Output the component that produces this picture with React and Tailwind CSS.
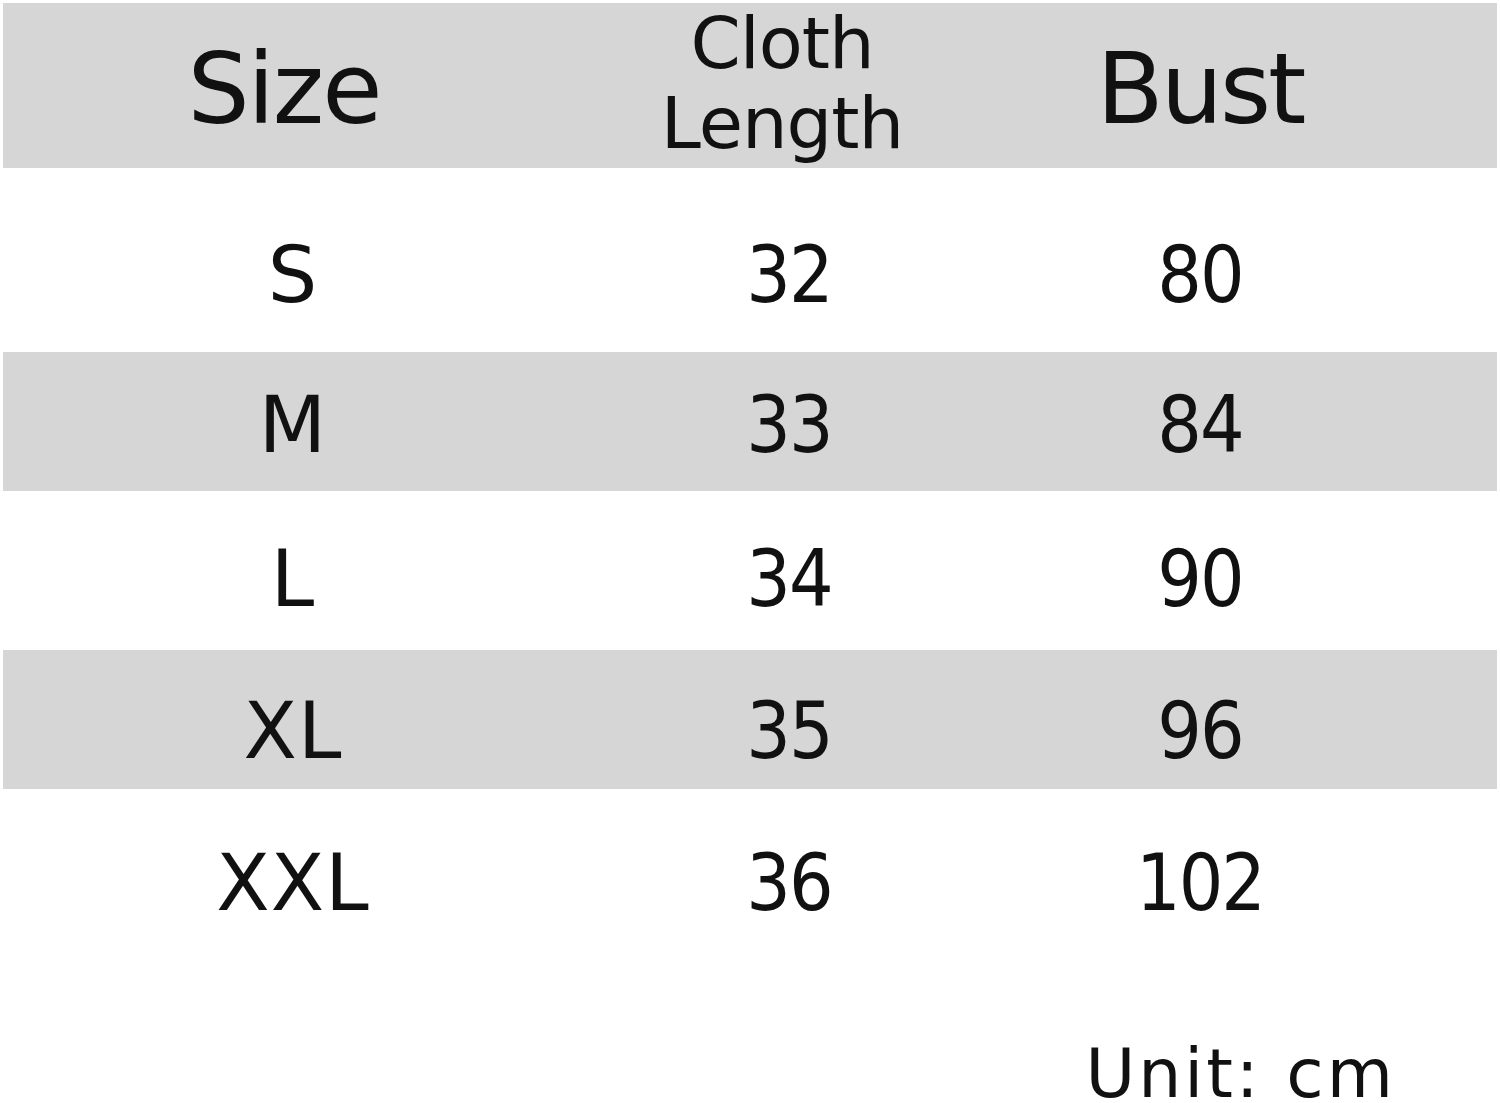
import React from 'react';

const rows = [
  { size: 'S', length: '32', bust: '80', gray: false, h: 'h-[184px]', pt: 'pt-[30px]' },
  { size: 'M', length: '33', bust: '84', gray: true, h: 'h-[139px]', pt: 'pt-[7px]' },
  { size: 'L', length: '34', bust: '90', gray: false, h: 'h-[159px]', pt: 'pt-[16px]' },
  { size: 'XL', length: '35', bust: '96', gray: true, h: 'h-[139px]', pt: 'pt-[22px]' },
  { size: 'XXL', length: '36', bust: '102', gray: false, h: 'h-[150px]', pt: 'pt-[38px]' },
];

const cols = 'grid grid-cols-[580px_410px_500px] items-center';

export default function App() {
  return (
    <div
      className="w-[1500px] h-[1103px] bg-white text-[#111] pt-[3px] px-[3px]"
      style={{ fontFamily: '"DejaVu Sans", Verdana, sans-serif' }}
    >
      {/* Header */}
      <div className={`${cols} h-[165px] bg-[#d6d6d6]`}>
        <div className="text-center text-[98px] leading-none pr-[18px] pb-[30px] tracking-[-2px]">Size</div>
        <div className="text-center text-[72px] leading-[80px] pr-[12px] pb-[42px] tracking-[-1px]">
          Cloth
          <br />
          Length
        </div>
        <div className="text-center pr-[86px] text-[98px] leading-none pb-[30px] tracking-[-3px]">Bust</div>
      </div>

      {/* Rows */}
      {rows.map((r) => (
        <div
          key={r.size}
          className={`${cols} ${r.h} ${r.pt} ${r.gray ? 'bg-[#d6d6d6]' : 'bg-white'} text-[78px] leading-none`}
        >
          <div className="text-center tracking-[1px]">{r.size}</div>
          <div className="text-center pl-[2px] font-stretch-condensed tracking-[-2px]">{r.length}</div>
          <div className="text-center pr-[86px] font-stretch-condensed tracking-[-2px]">{r.bust}</div>
        </div>
      ))}

      {/* Unit */}
      <div className="flex justify-end pr-[101px] pt-[110px] text-[68px] leading-[50px] tracking-[3px]">
        Unit: cm
      </div>
    </div>
  );
}
